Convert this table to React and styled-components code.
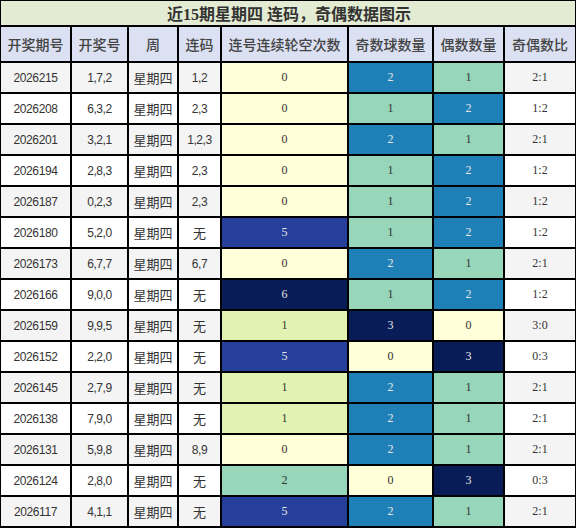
import React from "react";
import styled, { createGlobalStyle } from "styled-components";

const Global = createGlobalStyle`
  html, body { margin: 0; padding: 0; background: #fff; }
  body { font-family: "Liberation Sans", "Noto Sans CJK SC", sans-serif; }
`;

const Grid = styled.div`
  display: grid;
  grid-template-columns: 69px 55px 48px 41px 125px 83px 69px 70px;
  gap: 2px;
  width: 574px;
  background: #000;
  border: 1px solid #000;
  border-bottom-width: 2px;
`;

const Title = styled.div`
  grid-column: 1 / -1;
  height: 24px;
  background: #e3ecd2;
  color: #333;
  font-family: "Liberation Serif", "Noto Sans CJK SC", serif;
  font-weight: bold;
  font-size: 16px;
  display: flex;
  align-items: center;
  justify-content: center;
  padding-left: 2px;
`;

const Head = styled.div`
  height: 34px;
  background: #dbe1f2;
  color: #444;
  font-family: "Noto Sans CJK SC", sans-serif;
  font-weight: 500;
  font-size: 14px;
  display: flex;
  align-items: center;
  justify-content: center;
  white-space: nowrap;
`;

const Cell = styled.div`
  height: 29px;
  background: ${(p) => p.$bg};
  color: ${(p) => p.$fg || "#333"};
  font-family: ${(p) =>
    p.$serif
      ? `"Liberation Serif", "Noto Sans CJK SC", serif`
      : `"Liberation Sans", "Noto Sans CJK SC", sans-serif`};
  font-size: ${(p) => (p.$cjk ? "13px" : "12px")};
  letter-spacing: ${(p) => (p.$serif || p.$cjk ? "0" : "-0.4px")};
  display: flex;
  align-items: center;
  justify-content: center;
  white-space: nowrap;
`;

const rows = [
  ["2026215", "1,7,2", "1,2", 0, 2, 1, "2:1"],
  ["2026208", "6,3,2", "2,3", 0, 1, 2, "1:2"],
  ["2026201", "3,2,1", "1,2,3", 0, 2, 1, "2:1"],
  ["2026194", "2,8,3", "2,3", 0, 1, 2, "1:2"],
  ["2026187", "0,2,3", "2,3", 0, 1, 2, "1:2"],
  ["2026180", "5,2,0", "无", 5, 1, 2, "1:2"],
  ["2026173", "6,7,7", "6,7", 0, 2, 1, "2:1"],
  ["2026166", "9,0,0", "无", 6, 1, 2, "1:2"],
  ["2026159", "9,9,5", "无", 1, 3, 0, "3:0"],
  ["2026152", "2,2,0", "无", 5, 0, 3, "0:3"],
  ["2026145", "2,7,9", "无", 1, 2, 1, "2:1"],
  ["2026138", "7,9,0", "无", 1, 2, 1, "2:1"],
  ["2026131", "5,9,8", "8,9", 0, 2, 1, "2:1"],
  ["2026124", "2,8,0", "无", 2, 0, 3, "0:3"],
  ["2026117", "4,1,1", "无", 5, 2, 1, "2:1"],
];

const gapColors = {
  0: "#ffffd9",
  1: "#e0f3b2",
  2: "#97d6b9",
  5: "#253f9b",
  6: "#081d58",
};
const oeColors = {
  0: "#ffffd9",
  1: "#97d6b9",
  2: "#1f80b8",
  3: "#081d58",
};
const darkFg = "#e6e6e6";
const isDark = (c) => ["#253f9b", "#081d58", "#1f80b8"].includes(c);

const headers = ["开奖期号", "开奖号", "周", "连码", "连号连续轮空次数", "奇数球数量", "偶数数量", "奇偶数比"];

export default function App() {
  return (
    <>
      <Global />
      <Grid>
        <Title>近15期星期四 连码，奇偶数据图示</Title>
        {headers.map((h) => (
          <Head key={h}>{h}</Head>
        ))}
        {rows.map((r, i) => {
          const base = i % 2 === 0 ? "#f4f4f4" : "#ffffff";
          const g = gapColors[r[3]];
          const o = oeColors[r[4]];
          const e = oeColors[r[5]];
          return (
            <React.Fragment key={r[0]}>
              <Cell $bg={base}>{r[0]}</Cell>
              <Cell $bg={base}>{r[1]}</Cell>
              <Cell $bg={base} $cjk>星期四</Cell>
              <Cell $bg={base} $cjk={r[2] === "无"}>{r[2]}</Cell>
              <Cell $serif $bg={g} $fg={isDark(g) ? darkFg : undefined}>{r[3]}</Cell>
              <Cell $serif $bg={o} $fg={isDark(o) ? darkFg : undefined}>{r[4]}</Cell>
              <Cell $serif $bg={e} $fg={isDark(e) ? darkFg : undefined}>{r[5]}</Cell>
              <Cell $serif $bg={base}>{r[6]}</Cell>
            </React.Fragment>
          );
        })}
      </Grid>
    </>
  );
}
